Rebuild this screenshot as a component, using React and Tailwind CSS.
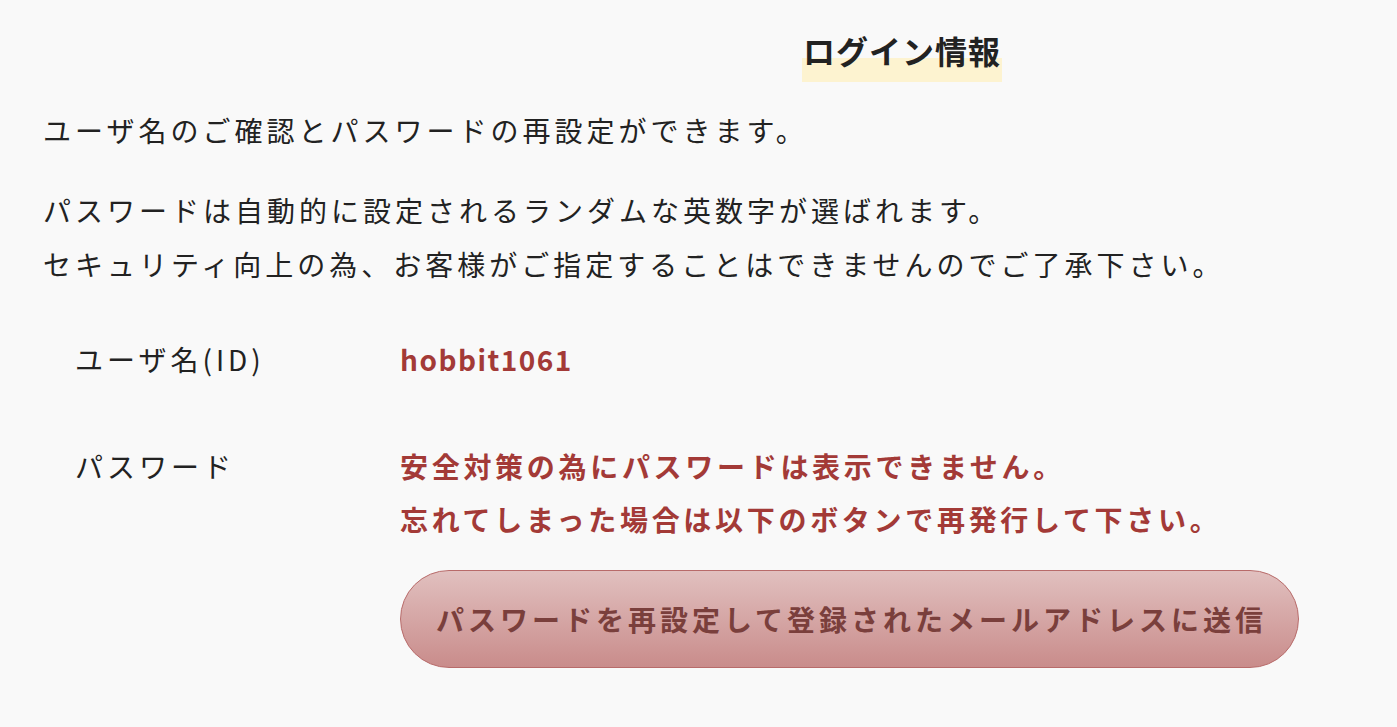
export default function App() {
  const font = { fontFamily: '"Noto Sans CJK JP", "Noto Sans", sans-serif' };
  return (
    <div className="min-h-[727px] w-full bg-[#f9f9f9] text-[#222222]" style={font}>
      <div className="pl-[43px] pt-[26px]">
        <div className="ml-[759px] flex">
          <h2 className="text-[32px] font-bold leading-[48px] tracking-[1px] px-[1px] pb-[8px] bg-[linear-gradient(transparent_57%,#fdf3d0_57%)]">
            ログイン情報
          </h2>
        </div>
        <p className="mt-[22px] text-[28px] leading-[53px] tracking-[4px]">
          ユーザ名のご確認とパスワードの再設定ができます。
        </p>
        <p className="mt-[26px] text-[28px] leading-[54px] tracking-[4px]">
          パスワードは自動的に設定されるランダムな英数字が選ばれます。
          <br />
          セキュリティ向上の為、お客様がご指定することはできませんのでご了承下さい。
        </p>
        <div className="mt-[42px] pl-[32px] flex flex-col gap-[54px]">
          <div className="flex text-[28px] leading-[53px]">
            <div className="w-[325px] shrink-0 tracking-[4px]">ユーザ名(ID)</div>
            <div className="font-bold text-[#a33a37] tracking-[1.5px]">hobbit1061</div>
          </div>
          <div className="flex text-[28px] leading-[53px]">
            <div className="w-[325px] shrink-0 tracking-[4px]">パスワード</div>
            <div className="flex flex-col">
              <div className="font-bold text-[#a33a37] tracking-[3.7px]">
                安全対策の為にパスワードは表示できません。
                <br />
                忘れてしまった場合は以下のボタンで再発行して下さい。
              </div>
              <button className="mt-[24px] w-[899px] h-[98px] rounded-full border border-[#b86b6a] bg-[linear-gradient(#e1c0bf,#c98c8b)] text-[#7a3f3c] font-bold text-[28px] tracking-[4px] pl-[4px]">
                パスワードを再設定して登録されたメールアドレスに送信
              </button>
            </div>
          </div>
        </div>
      </div>
    </div>
  );
}
